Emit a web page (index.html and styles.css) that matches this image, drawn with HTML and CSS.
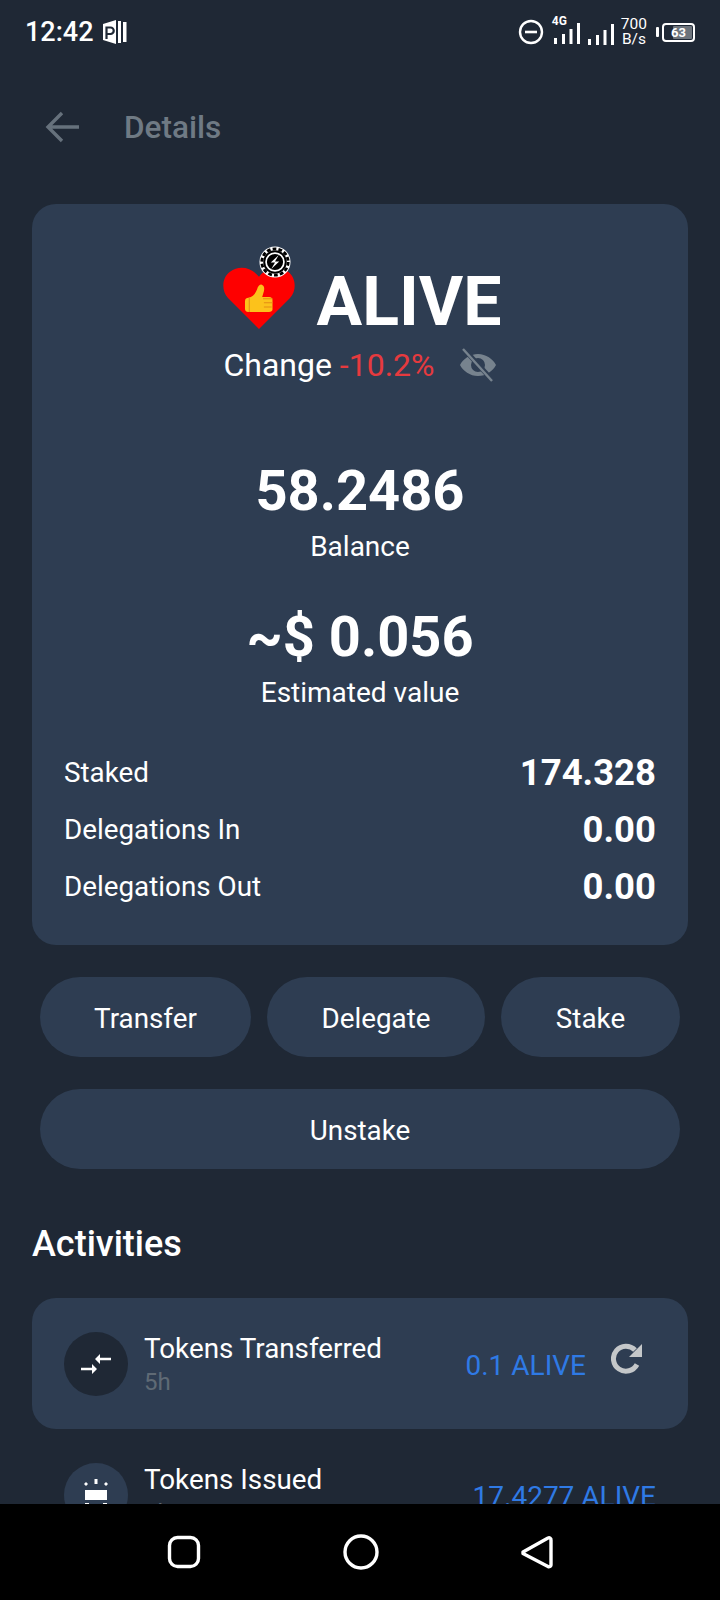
FILE: index.html
```html
<!DOCTYPE html>
<html lang="en">
<head>
    <meta charset="UTF-8">
    <title>Details</title>
    <link rel="stylesheet" href="styles.css">
</head>
<body>
    <div class="screen">
        <div class="status-bar">
            <div class="status-left">
                <span class="clock">12:42</span>
                <svg class="parking" width="24" height="24" viewBox="0 0 24 24">
                    <path fill="#fff" d="M0 4 13 0V24L0 20Z"/>
                    <path fill="#fff" d="M15 1h3v22h-3zM20 2h3.500v20H20z"/>
                    <path fill="none" stroke="#1f2835" stroke-width="2.200" d="M3.500 19V7.500h4a3 3 0 0 1 0 6.500h-4"/>
                </svg>
            </div>
            <div class="status-right">
                <svg width="26" height="26" viewBox="0 0 26 26"><circle cx="13" cy="13" r="11" fill="none" stroke="#fff" stroke-width="2.400"/><path d="M7 13h12" stroke="#fff" stroke-width="2.600"/></svg>
                <div class="signal">
                    <span class="net-type">4G</span>
                    <svg width="26" height="22" viewBox="0 0 26 22"><path fill="#fff" d="M0 15h3v6H0zM8 11h3v10H8zM15.500 6h3v15h-3zM23 0h3v21h-3z"/></svg>
                </div>
                <svg class="signal-two" width="26" height="22" viewBox="0 0 26 22"><path fill="#fff" d="M0 15h3v6H0zM8 11h3v10H8zM15.500 6h3v15h-3zM23 0h3v21h-3z"/></svg>
                <div class="net-speed"><span>700</span><span>B/s</span></div>
                <div class="battery-tip"></div>
                <div class="battery"><div class="battery-fill"></div><span>63</span></div>
            </div>
        </div>

        <div class="header">
            <svg class="back" width="36" height="34" viewBox="0 0 36 34"><path d="M34 17H3M17 3 3 17l14 14" fill="none" stroke="#66717c" stroke-width="3.400"/></svg>
            <h1>Details</h1>
        </div>

        <div class="content">
            <div class="card token-card">
                <div class="token-title">
                    <div class="token-logo">
                        <svg class="heart" width="72" height="62" viewBox="0 0 72 64" preserveAspectRatio="none">
                            <path fill="#fe0000" d="M36 64 5 32C-2 24-1 11 7 5c9-7 21-5 29 5 8-10 20-12 29-5 8 6 9 19 2 27Z"/>
                            <g transform="translate(6.500 6) scale(.86)">
                                <path fill="#fcc21b" d="M22 47c-3 0-4-2-4-4v-9c0-3 2-4 4-4 5-1 8-5 10-10 1-4 3-6 5-6 3 1 4 4 3 8l-2 7h8c3 0 4 2 4 4v11c0 2-2 3-4 3Z"/>
                                <path fill="none" stroke="#e48c15" stroke-width="1.200" d="M39 31h11M40 36h10M40 41h9M23 30v17"/>
                            </g>
                        </svg>
                        <svg class="badge" width="32" height="32" viewBox="0 0 34 34">
                            <circle cx="17" cy="17" r="16.500" fill="#fff"/>
                            <circle cx="17" cy="17" r="14" fill="none" stroke="#000" stroke-width="3" stroke-dasharray="4 2.300"/>
                            <circle cx="17" cy="17" r="12.500" fill="#000"/>
                            <circle cx="17" cy="17" r="9.500" fill="none" stroke="#fff" stroke-width="1.800"/>
                            <path fill="#fff" d="M21 9.500 12.500 17.500h4.500L13 24.500 21.500 16.500H17Z"/>
                        </svg>
                    </div>
                    <span class="token-name">ALIVE</span>
                </div>
                <div class="token-change">
                    <span>Change <span class="negative">-10.2%</span></span>
                    <svg class="eye" width="38" height="34" viewBox="0 0 38 34">
                        <path fill="#77838e" d="M19 6C11 6 4 11 1 17c3 6 10 11 18 11s15-5 18-11C34 11 27 6 19 6Zm0 18a7 7 0 1 1 0-14 7 7 0 0 1 0 14Z"/>
                        <path d="M5 1 34 33" stroke="#2f3e53" stroke-width="5"/>
                        <path d="M4 1 33 33" stroke="#77838e" stroke-width="2.400"/>
                    </svg>
                </div>

                <div class="figure figure-balance">
                    <div class="figure-value">58.2486</div>
                    <div class="figure-label">Balance</div>
                </div>
                <div class="figure figure-estimate">
                    <div class="figure-value">~$ 0.056</div>
                    <div class="figure-label">Estimated value</div>
                </div>

                <div class="stats">
                    <div class="stat-row"><span>Staked</span><strong>174.328</strong></div>
                    <div class="stat-row"><span>Delegations In</span><strong>0.00</strong></div>
                    <div class="stat-row"><span>Delegations Out</span><strong>0.00</strong></div>
                </div>
            </div>

            <div class="actions">
                <button class="btn-transfer">Transfer</button>
                <button class="btn-delegate">Delegate</button>
                <button class="btn-stake">Stake</button>
                <button class="btn-unstake">Unstake</button>
            </div>

            <h2>Activities</h2>

            <div class="activity activity-active">
                <div class="activity-icon">
                    <svg width="30" height="20" viewBox="0 0 30 20"><path fill="none" stroke="#fff" stroke-width="2.600" d="M0 15h13M17 5h13"/><path fill="#fff" d="M11 10l5 5-5 5ZM19 0l-5 5 5 5Z"/></svg>
                </div>
                <div class="activity-text">
                    <div class="activity-title">Tokens Transferred</div>
                    <div class="activity-time">5h</div>
                </div>
                <div class="activity-amount">0.1 ALIVE</div>
                <svg class="refresh" width="32" height="32" viewBox="0 0 32 32">
                    <path fill="none" stroke="#c4c7c9" stroke-width="5" d="M26 22.500A12.500 12.500 0 1 1 24 8"/>
                    <path fill="#c4c7c9" d="M31 2V15H18Z"/>
                </svg>
            </div>

            <div class="activity">
                <div class="activity-icon activity-icon-light">
                    <svg width="34" height="34" viewBox="0 0 34 34"><path fill="#fff" d="M6 12h22v10H6zM15.500 1h3v5h-3zM7 4l2 2-2 2-2-2zM27 4l2 2-2 2-2-2zM6 25h4v4H6zM24 25h4v4h-4z"/></svg>
                </div>
                <div class="activity-text">
                    <div class="activity-title">Tokens Issued</div>
                    <div class="activity-time">5h</div>
                </div>
                <div class="activity-amount">17.4277 ALIVE</div>
            </div>
        </div>

        <div class="nav-bar">
            <svg width="36" height="36" viewBox="0 0 36 36"><rect x="3.500" y="3.500" width="29" height="29" rx="8" fill="none" stroke="#fff" stroke-width="3.400"/></svg>
            <svg width="38" height="38" viewBox="0 0 38 38"><circle cx="19" cy="19" r="16" fill="none" stroke="#fff" stroke-width="3.400"/></svg>
            <svg width="36" height="36" viewBox="0 0 36 36"><path d="M4 18 29 4a2 2 0 0 1 3 2v25a2 2 0 0 1-3 1.500L4 19.500Z" fill="none" stroke="#fff" stroke-width="3.400" stroke-linejoin="round"/></svg>
        </div>
    </div>
</body>
</html>
```

FILE: styles.css
```css
* {
    box-sizing: border-box;
}

body {
    margin: 0;
    font-family: Roboto, sans-serif;
    color: #fff;
    background: #1f2835;
}

svg {
    display: block;
    flex: none;
}

.screen {
    width: 720px;
    height: 1600px;
    display: flex;
    flex-direction: column;
    overflow: hidden;
}

.status-bar {
    height: 60px;
    padding: 18px 25px 0 25px;
    display: flex;
    justify-content: space-between;
    align-items: flex-start;
}

.status-left {
    display: flex;
    align-items: center;
    height: 28px;
    gap: 9px;
}

.clock {
    font-size: 27px;
    line-height: 30px;
    font-weight: 500;
}

.status-right {
    display: flex;
    align-items: center;
    height: 28px;
}

.signal {
    position: relative;
    margin-left: 10px;
    height: 28px;
    padding-top: 5px;
}

.net-type {
    position: absolute;
    top: -4px;
    left: -2px;
    font-size: 12px;
    font-weight: 700;
}

.signal-two {
    margin: 5px 0 0 8px;
}

.net-speed {
    margin-left: 7px;
    display: flex;
    flex-direction: column;
    font-size: 15.500px;
    line-height: 15px;
    font-weight: 400;
    align-items: center;
}

.battery-tip {
    width: 3px;
    height: 10px;
    margin: 0 3px 0 9px;
    background: #fff;
    border-radius: 1px;
}

.battery {
    position: relative;
    width: 33px;
    height: 19px;
    border: 2px solid #fff;
    border-radius: 4px;
    text-align: center;
    font-size: 13px;
    line-height: 15px;
    font-weight: 700;
}

.battery-fill {
    position: absolute;
    top: 1px;
    right: 1px;
    bottom: 1px;
    width: 19px;
    background: #6d747c;
    border-radius: 1px;
}

.battery span {
    position: relative;
}

.header {
    height: 134px;
    padding: 0 0 0 45px;
    display: flex;
    align-items: center;
}

.header h1 {
    margin: 0 0 0 43px;
    font-size: 31.500px;
    font-weight: 500;
    color: #6f7a84;
}

.content {
    flex: 1;
    min-height: 0;
    overflow: hidden;
    padding: 10px 32px 0;
}

.card {
    background: #2e3d52;
    border-radius: 24px;
}

.token-card {
    height: 741px;
    padding: 40px 32px 0;
}

.token-title {
    display: flex;
    justify-content: center;
    align-items: flex-start;
    height: 100px;
    padding-left: 5px;
}

.token-logo {
    position: relative;
    width: 72px;
    height: 88px;
    margin-right: 21px;
}

.heart {
    position: absolute;
    top: 23px;
    left: 0;
}

.badge {
    position: absolute;
    top: 2px;
    left: 36px;
}

.token-name {
    font-size: 68px;
    line-height: 72px;
    margin-top: 22px;
    font-weight: 700;
}

.token-change {
    display: flex;
    justify-content: center;
    align-items: center;
    height: 40px;
    margin-top: 1px;
    font-size: 32px;
    gap: 24px;
}

.negative {
    color: #e63a3e;
}

.figure {
    text-align: center;
}

.figure-balance {
    margin-top: 70px;
}

.figure-estimate {
    margin-top: 36px;
}

.figure-value {
    font-size: 56px;
    line-height: 72px;
    font-weight: 700;
}

.figure-label {
    margin-top: 2px;
    font-size: 28px;
    line-height: 36px;
}

.stats {
    margin-top: 33px;
}

.stat-row {
    height: 57px;
    display: flex;
    justify-content: space-between;
    align-items: center;
    font-size: 27.800px;
}

.stat-row strong {
    font-size: 36.500px;
    font-weight: 700;
}

.actions {
    margin-top: 32px;
    padding: 0 8px;
    display: grid;
    grid-template-columns: 211px 218px 179px;
    gap: 32px 16px;
}

.actions button {
    height: 80px;
    padding: 2px 0 0;
    border: none;
    border-radius: 40px;
    background: #2e3d52;
    color: #fff;
    font-family: Roboto, sans-serif;
    font-size: 27.800px;
}

.actions .btn-unstake {
    grid-column: 1 / -1;
}

h2 {
    margin: 51px 0 30px;
    font-size: 36px;
    line-height: 48px;
    font-weight: 500;
}

.activity {
    height: 131px;
    padding: 0 32px;
    display: flex;
    align-items: center;
}

.activity-active {
    padding-right: 45px;
    background: #2e3d52;
    border-radius: 24px;
}

.activity-icon {
    width: 64px;
    height: 64px;
    flex: none;
    border-radius: 50%;
    background: #1f2835;
    display: flex;
    align-items: center;
    justify-content: center;
}

.activity-icon-light {
    background: #2e3d52;
}

.activity-text {
    flex: 1;
    margin-left: 16px;
}

.activity-title {
    font-size: 27.800px;
    line-height: 36px;
}

.activity-time {
    font-size: 24px;
    line-height: 30px;
    color: #5f6a75;
}

.activity-amount {
    padding-top: 3px;
    font-size: 28px;
    color: #2f7ae5;
}

.refresh {
    margin: 0 0 12px 25px;
}

.nav-bar {
    height: 96px;
    flex: none;
    background: #000;
    padding: 0 165px 0 166px;
    display: flex;
    align-items: center;
    justify-content: space-between;
}
```
